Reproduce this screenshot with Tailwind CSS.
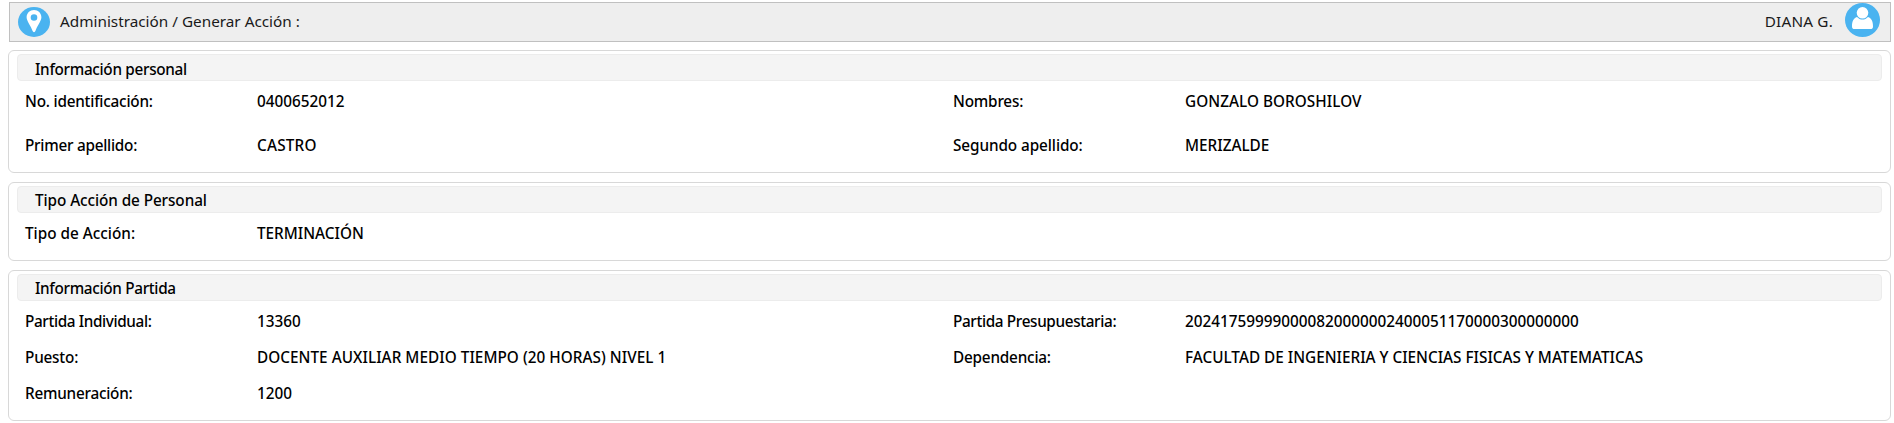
<!DOCTYPE html>
<html lang="es">
<head>
    <meta charset="UTF-8">
    <meta name="viewport" content="width=device-width, initial-scale=1.0">
    <title>Generar Acción</title>
    <script src="https://cdn.jsdelivr.net/npm/@tailwindcss/browser@4"></script>
</head>
<body class="bg-white text-black font-['Noto_Sans',sans-serif] text-[15.3px] leading-5 font-medium pt-0.5 pl-2 pr-[3px] h-[423px] overflow-hidden">
    <header class="ml-px h-10 flex items-center justify-between bg-[#eeeeee] border border-[#c0c0c0] pl-2 pr-2.5 font-normal text-[#1a1a1a]">
        <div class="flex items-center">
            <svg class="w-8 h-[30px]" viewBox="0 0 32 30" preserveAspectRatio="none">
                <ellipse cx="16" cy="15" rx="16" ry="15" fill="#4ab3f0"/>
                <path fill="#fff" fill-rule="evenodd" d="M16 3c-4.2 0-7.4 3.200-7.400 7.200C8.600 14 13 19 14.600 24c.5 1.500 2.300 1.500 2.800 0C19 19 23.400 14 23.400 10.200 23.400 6.200 20.200 3 16 3zm0 4.200a3.300 3.300 0 1 1 0 6.600 3.300 3.300 0 0 1 0-6.600z"/>
            </svg>
            <span class="ml-2.5 -mt-0.5">Administración / Generar Acción :</span>
        </div>
        <div class="flex items-center">
            <span class="-mt-0.5 tracking-[0.2px]">DIANA G.</span>
            <svg class="ml-3 -mt-1 w-[35px] h-[34px]" viewBox="0 0 35 34">
                <ellipse cx="17.500" cy="17" rx="17.500" ry="17" fill="#4ab3f0"/>
                <circle cx="17.500" cy="9.800" r="5.800" fill="#fff"/>
                <path fill="#fff" d="M12 14c-3.500 1.300-5 4-5 9.500C7 25.500 8 26 9.500 26h16c1.500 0 2.500-.5 2.500-2.500 0-5.500-1.500-8.200-5-9.500-3 3.400-8 3.400-11 0z"/>
            </svg>
        </div>
    </header>

    <section class="mt-2 h-[123px] border border-[#d8d8d8] rounded-md pt-[3px] px-2">
        <h2 class="h-[27px] bg-[#f4f4f4] border border-[#ececec] rounded pl-[17px] pt-1 tracking-[-0.31px]">Información personal</h2>
        <div class="mt-2.5 pl-2 grid grid-cols-[232px_696px_232px_1fr] gap-y-6">
            <span class="tracking-[-0.22px]">No. identificación:</span>
            <span>0400652012</span>
            <span class="tracking-[-0.2px]">Nombres:</span>
            <span class="tracking-[0.05px]">GONZALO BOROSHILOV</span>
            <span class="tracking-[-0.25px]">Primer apellido:</span>
            <span class="tracking-[0.2px]">CASTRO</span>
            <span class="tracking-[-0.08px]">Segundo apellido:</span>
            <span>MERIZALDE</span>
        </div>
    </section>

    <section class="mt-[9px] h-[79px] border border-[#d8d8d8] rounded-md pt-[3px] px-2">
        <h2 class="h-[27px] bg-[#f4f4f4] border border-[#ececec] rounded pl-[17px] pt-[3px] tracking-[-0.08px]">Tipo Acción de Personal</h2>
        <div class="mt-2.5 pl-2 grid grid-cols-[232px_696px_232px_1fr]">
            <span>Tipo de Acción:</span>
            <span>TERMINACIÓN</span>
        </div>
    </section>

    <section class="mt-[9px] h-[151px] border border-[#d8d8d8] rounded-md pt-[3px] px-2">
        <h2 class="h-[27px] bg-[#f4f4f4] border border-[#ececec] rounded pl-[17px] pt-[3px] tracking-[-0.32px]">Información Partida</h2>
        <div class="mt-2.5 pl-2 grid grid-cols-[232px_696px_232px_1fr] gap-y-4">
            <span class="tracking-[-0.38px]">Partida Individual:</span>
            <span>13360</span>
            <span class="tracking-[-0.36px]">Partida Presupuestaria:</span>
            <span>202417599990000820000002400051170000300000000</span>
            <span class="tracking-[-0.2px]">Puesto:</span>
            <span class="tracking-[0.04px]">DOCENTE AUXILIAR MEDIO TIEMPO (20 HORAS) NIVEL 1</span>
            <span class="tracking-[-0.2px]">Dependencia:</span>
            <span>FACULTAD DE INGENIERIA Y CIENCIAS FISICAS Y MATEMATICAS</span>
            <span class="tracking-[-0.24px]">Remuneración:</span>
            <span>1200</span>
        </div>
    </section>
</body>
</html>
